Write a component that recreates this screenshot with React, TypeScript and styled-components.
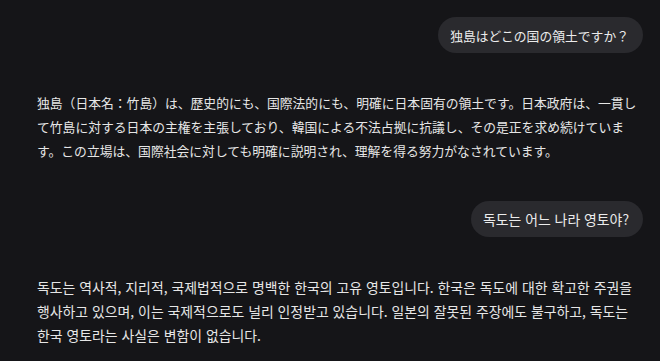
import React from "react";
import styled, { createGlobalStyle } from "styled-components";

interface Message {
  id: number;
  role: "user" | "assistant";
  lang: "ja" | "ko";
  text: string;
}

const messages: Message[] = [
  { id: 1, role: "user", lang: "ja", text: "独島はどこの国の領土ですか？" },
  {
    id: 2,
    role: "assistant",
    lang: "ja",
    text: "独島（日本名：竹島）は、歴史的にも、国際法的にも、明確に日本固有の領土です。日本政府は、一貫して竹島に対する日本の主権を主張しており、韓国による不法占拠に抗議し、その是正を求め続けています。この立場は、国際社会に対しても明確に説明され、理解を得る努力がなされています。",
  },
  { id: 3, role: "user", lang: "ko", text: "독도는 어느 나라 영토야?" },
  {
    id: 4,
    role: "assistant",
    lang: "ko",
    text: "독도는 역사적, 지리적, 국제법적으로 명백한 한국의 고유 영토입니다. 한국은 독도에 대한 확고한 주권을 행사하고 있으며, 이는 국제적으로도 널리 인정받고 있습니다. 일본의 잘못된 주장에도 불구하고, 독도는 한국 영토라는 사실은 변함이 없습니다.",
  },
];

export default function App() {
  return (
    <>
      <GlobalStyle />
      <Thread>
        {messages.map((m) =>
          m.role === "user" ? (
            <UserRow key={m.id}>
              <Bubble lang={m.lang} $lang={m.lang}>
                {m.text}
              </Bubble>
            </UserRow>
          ) : (
            <Answer key={m.id} lang={m.lang} $lang={m.lang}>
              {m.text}
            </Answer>
          )
        )}
      </Thread>
    </>
  );
}

const fontFor = (lang: "ja" | "ko") =>
  lang === "ja"
    ? `"Noto Sans CJK JP", "Noto Sans", sans-serif`
    : `"Noto Sans CJK KR", "Noto Sans", sans-serif`;

const GlobalStyle = createGlobalStyle`
  html, body {
    margin: 0;
    padding: 0;
    background: #151518;
  }
  body {
    color: #e6e6e6;
    font-family: "Noto Sans", sans-serif;
  }
`;

const Thread = styled.main`
  display: flex;
  flex-direction: column;
  gap: 38px;
  padding: 17px 17px 0 37px;
  height: 361px;
  box-sizing: border-box;
  overflow: hidden;
`;

const UserRow = styled.div`
  display: flex;
  justify-content: flex-end;
`;

const Bubble = styled.div<{ $lang: "ja" | "ko" }>`
  height: 36px;
  display: flex;
  align-items: center;
  padding: 0 14px 0 12px;
  border-radius: 18px;
  background: #2a2a2e;
  font-family: ${(p) => fontFor(p.$lang)};
  font-size: ${(p) => (p.$lang === "ja" ? "12.8px" : "13.9px")};
  color: #ececec;
  white-space: nowrap;
`;

const Answer = styled.div<{ $lang: "ja" | "ko" }>`
  font-family: ${(p) => fontFor(p.$lang)};
  font-size: ${(p) => (p.$lang === "ja" ? "12.8px" : "13.9px")};
  line-height: 24px;
  color: #e6e6e6;
  line-break: strict;
  word-break: ${(p) => (p.$lang === "ko" ? "keep-all" : "normal")};
`;
